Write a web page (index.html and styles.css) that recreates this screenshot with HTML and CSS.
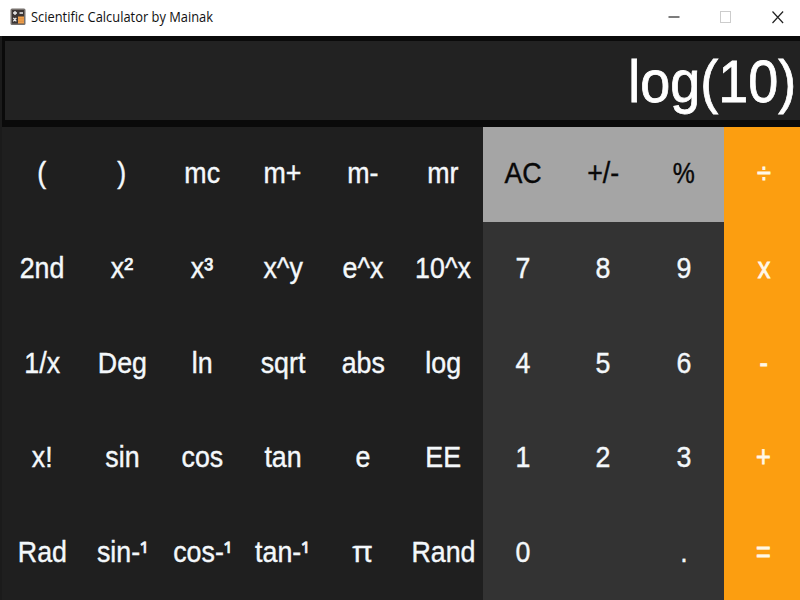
FILE: index.html
```html
<!DOCTYPE html>
<html lang="en">
<head>
<meta charset="utf-8">
<title>Scientific Calculator by Mainak</title>
<link rel="stylesheet" href="styles.css">
</head>
<body>
<header class="titlebar">
  <svg class="app-icon" width="16" height="18" viewBox="0 0 16 18">
    <rect x="0.5" y="0.5" width="15" height="16.5" rx="1.5" fill="#77716d"/>
    <rect x="2" y="2" width="12" height="13.5" fill="#3b3534"/>
    <rect x="8" y="8.5" width="6" height="7" fill="#f0a04b"/>
    <path d="M8 10.8h6M8 13.2h6" stroke="#c9803a" stroke-width=".6"/>
    <path d="M3 5h4M5 3v4M9.500 5h3.500M3.300 9.800l3 3.600M6.300 9.800l-3 3.600" stroke="#eee" stroke-width="1.300" fill="none"/>
  </svg>
  <span class="title">Scientific Calculator by Mainak</span>
  <div class="controls">
    <svg width="12" height="14" viewBox="0 0 12 14"><path d="M0.500 7h11" stroke="#444" stroke-width="1.400"/></svg>
    <svg width="12" height="14" viewBox="0 0 12 14"><rect x="0.500" y="1.500" width="10" height="11" fill="none" stroke="#ccc"/></svg>
    <svg width="12" height="14" viewBox="0 0 12 14"><path d="M0.500 1.500l10.600 11.500M11.100 1.500l-10.600 11.500" stroke="#222" stroke-width="1.200"/></svg>
  </div>
</header>
<main class="calculator">
  <div class="display"><span>log(10)</span></div>
  <div class="keys">
    <button><span>(</span></button><button><span>)</span></button><button><span>mc</span></button><button><span>m+</span></button><button><span>m-</span></button><button><span>mr</span></button><button class="util"><span>AC</span></button><button class="util"><span>+/-</span></button><button class="util"><span class="percent">%</span></button><button class="op"><span>÷</span></button>
    <button><span>2nd</span></button><button><span>x<b>²</b></span></button><button><span>x<b>³</b></span></button><button><span>x^y</span></button><button><span>e^x</span></button><button><span>10^x</span></button><button class="num"><span>7</span></button><button class="num"><span>8</span></button><button class="num"><span>9</span></button><button class="op"><span>x</span></button>
    <button><span>1/x</span></button><button><span>Deg</span></button><button><span>ln</span></button><button><span>sqrt</span></button><button><span>abs</span></button><button><span>log</span></button><button class="num"><span>4</span></button><button class="num"><span>5</span></button><button class="num"><span>6</span></button><button class="op"><span>-</span></button>
    <button><span>x!</span></button><button><span>sin</span></button><button><span>cos</span></button><button><span>tan</span></button><button><span>e</span></button><button><span>EE</span></button><button class="num"><span>1</span></button><button class="num"><span>2</span></button><button class="num"><span>3</span></button><button class="op"><span>+</span></button>
    <button><span>Rad</span></button><button><span>sin-<b class="inv">¹</b></span></button><button><span>cos-<b class="inv">¹</b></span></button><button><span>tan-<b class="inv">¹</b></span></button><button><span class="pi">π</span></button><button><span>Rand</span></button><button class="num"><span>0</span></button><button class="num"></button><button class="num"><span>.</span></button><button class="op"><span>=</span></button>
  </div>
</main>
</body>
</html>
```

FILE: styles.css
```css
* { box-sizing: border-box; }

body {
  margin: 0;
  width: 800px;
  height: 600px;
  overflow: hidden;
  display: flex;
  flex-direction: column;
  background: #fff;
  font-family: "Liberation Sans", sans-serif;
}

.titlebar {
  height: 36px;
  flex: none;
  display: flex;
  align-items: center;
  padding: 0 16px 2px 10px;
}

.app-icon { flex: none; margin-right: 5px; }

.title {
  font: 14px/20px "Open Sans", sans-serif;
  color: #111;
  white-space: nowrap;
  transform: scaleX(0.92);
  transform-origin: left;
}

.controls {
  margin-left: auto;
  display: flex;
  gap: 40px;
}

.controls svg { display: block; }

.calculator {
  flex: 1;
  min-height: 0;
  display: flex;
  flex-direction: column;
  background: #0a0a0a;
  border-left: 2px solid #1b1b1b;
}

.display {
  flex: none;
  height: 79px;
  margin: 5px 0 7px 3px;
  padding: 2px 4px 0 0;
  background: #222;
  color: #fff;
  text-align: right;
  font-size: 58.5px;
  line-height: 77px;
  -webkit-text-stroke: 0.8px currentColor;
}

.display span {
  display: inline-block;
  transform: scaleX(0.922);
  transform-origin: right;
}

.keys {
  flex: none;
  display: grid;
  grid-template-columns: repeat(10, 80.2px);
  grid-template-rows: repeat(5, 94.7px);
  width: 802px;
}

button {
  display: flex;
  align-items: center;
  justify-content: center;
  border: 0;
  padding: 0 0 2px;
  background: #1f1f1f;
  color: #f4f8fb;
  font: 28.8px/34px "Liberation Sans", sans-serif;
  white-space: nowrap;
  -webkit-text-stroke: 0.4px currentColor;
}

button span { transform: scaleX(0.93); }
button b { font-weight: normal; -webkit-text-stroke-width: 0.7px; }
button .inv {
  font-family: "Open Sans", sans-serif;
  font-size: 26px;
  line-height: 0;
  vertical-align: -2px;
}
button .pi {
  font-family: "Open Sans", sans-serif;
  padding-bottom: 2px;
  transform: scaleX(1.08);
}
button .percent { transform: scaleX(0.86); }

.util { background: #a5a5a5; color: #080808; }
.num { background: #333; }
.op {
  background: #fc9e10;
  color: #fff8e8;
  -webkit-text-stroke-width: 0.8px;
}
.op span { transform: scaleX(0.88); }
```
